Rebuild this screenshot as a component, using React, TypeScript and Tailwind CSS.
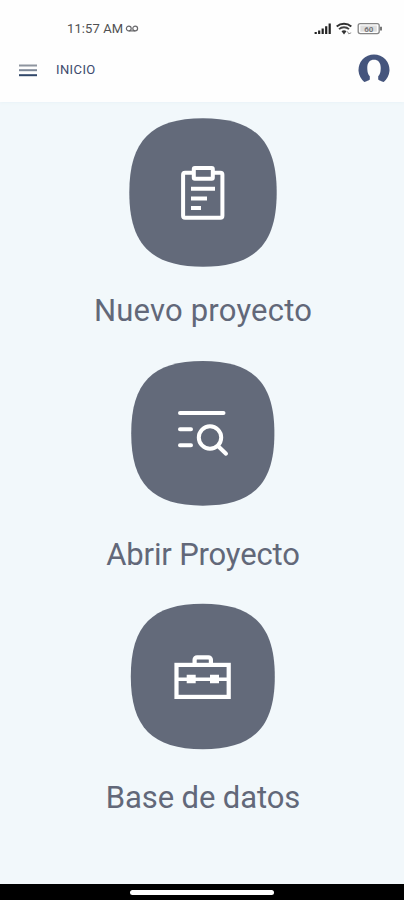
import type { ReactNode } from "react";

function Squircle({ viewBox, box, className, children }: { viewBox: string; box: [number, number, number, number]; className: string; children: ReactNode }) {
  const [x, y, w, h] = box;
  return (
    <svg viewBox={viewBox} className={className} fill="none">
      <path
        transform={`translate(${x} ${y}) scale(${w / 100} ${h / 100})`}
        d="M50 0C85 0 100 15 100 50C100 85 85 100 50 100C15 100 0 85 0 50C0 15 15 0 50 0Z"
        fill="#636a7a"
      />
      {children}
    </svg>
  );
}

function StatusBar() {
  return (
    <div className="flex h-[42px] items-start justify-between pt-[22px] pr-[21px] pl-[67px]">
      <div className="flex items-center">
        <span className="-mt-px w-[58px] text-[13px] leading-[15px] tracking-[0.1px] whitespace-nowrap text-[#505052]">11:57 AM</span>
        <svg viewBox="0 0 14 8" className="-mt-px h-2 w-3.5" fill="none" stroke="#68686b" strokeWidth="1.2">
          <circle cx="3.8" cy="3.5" r="2.4" />
          <circle cx="10.2" cy="3.5" r="2.4" />
          <path d="M3.8 5.9h6.4" />
        </svg>
      </div>
      <svg viewBox="314 21 69 15" className="-mt-px h-[15px] w-[69px]" fill="none">
        <path d="M315.7 34v-2M319.2 34v-3.5M322.7 34v-5.5M326.2 34v-7.7M329.7 34V23.5" stroke="#222" strokeWidth="2.2" />
        <path d="M336.7 26.4c4.2-3.6 10.4-3.6 14.6 0" stroke="#303030" strokeWidth="2" />
        <path d="M339 29.1c2.8-2.5 7.2-2.5 10 0" stroke="#444" strokeWidth="1.8" />
        <path d="M341.5 31.2c1.5-1.2 3.5-1.2 5 0L344 34.5z" fill="#333" />
        <path d="M347.5 31.5l1.2 2.3 2.5-1" stroke="#8b8b8b" />
        <rect x="358.2" y="23.6" width="21" height="10" rx="2" stroke="#858585" strokeWidth="1.3" />
        <rect x="360.3" y="25.5" width="16.5" height="6.2" fill="#dedede" />
        <path d="M381 26.8v3.6" stroke="#777" strokeWidth="2" />
        <text x="368.8" y="31.5" textAnchor="middle" fontSize="8" fontWeight="700" fill="#77777a">60</text>
      </svg>
    </div>
  );
}

function Header() {
  return (
    <header className="h-[102px] bg-[#fefefe] shadow-[0_1px_3px_#e9f3f7]">
      <StatusBar />
      <div className="flex h-14 items-center justify-between pr-[14px] pl-[19px]">
        <div className="flex items-center">
          <svg viewBox="0 0 18 14" className="h-3.5 w-[18px]" strokeWidth="2">
            <path d="M0 2.5h18" stroke="#8e959f" />
            <path d="M0 7.2h18" stroke="#7d8898" />
            <path d="M0 12.2h18" stroke="#304769" />
          </svg>
          <span className="ml-[19px] text-[13px] leading-4 tracking-[0.4px] text-[#3d4a6d]">INICIO</span>
        </div>
        <svg viewBox="358 54 32 32" className="h-8 w-8">
          <path
            d="M364.3 82a15.5 15.5 0 1 1 19.4 0c-2.2-.6-4.7-1.7-5.5-2.5v-3.3c1.6-1.7 2.2-3.6 2.4-6 .8-7.1-2.2-10.4-6.6-10.4s-7.4 3.3-6.6 10.4c.2 2.4.8 4.3 2.4 6v3.3c-.8.8-3.3 1.9-5.5 2.5z"
            fill="#45557d"
          />
        </svg>
      </div>
    </header>
  );
}

export default function App() {
  return (
    <div className="flex h-[900px] w-[404px] flex-col overflow-hidden bg-[#f2f8fb] font-['Roboto',sans-serif]">
      <Header />
      <main className="flex flex-1 flex-col items-center pt-4 text-center text-[31px] leading-[38px] text-[#626879]">
        <button className="flex h-[243px] flex-col items-center pl-[2px]">
          <Squircle viewBox="129 118 148 149" box={[129.3, 118.2, 147.4, 148.5]} className="h-[149px] w-[148px]">
            <g stroke="#fff" strokeWidth="4">
              <path d="M193.7 172.7h-8.6a2 2 0 0 0-2 2v41.1a2 2 0 0 0 2 2h35.3a2 2 0 0 0 2-2v-41.1a2 2 0 0 0-2-2h-7.4" />
              <rect x="193.8" y="168" width="19" height="10.8" rx="1" />
              <path d="M191 188.8h24M191 198.4h16M191 208h10" />
            </g>
          </Squircle>
          <span className="mt-[25px] tracking-[0.2px]">Nuevo proyecto</span>
        </button>
        <button className="flex h-[242px] flex-col items-center pl-[2px]">
          <Squircle viewBox="130 360 146 147" box={[131.2, 361, 143.2, 144.7]} className="-mt-px h-[147px] w-[146px]">
            <g stroke="#fff" strokeWidth="4" strokeLinecap="round">
              <path d="M180 413.1h43.5M180 429.3h11M180 445.3h11M218.5 446.5l7.5 7.2" />
              <circle cx="210" cy="437.5" r="11.2" />
            </g>
          </Squircle>
          <span className="mt-[29px] tracking-[-0.17px]">Abrir Proyecto</span>
        </button>
        <button className="flex flex-col items-center pl-[2px]">
          <Squircle viewBox="130 603 146 147" box={[130.8, 603.8, 144, 145.4]} className="h-[147px] w-[146px]">
            <g stroke="#fff" strokeWidth="4.2">
              <rect x="176.5" y="664.9" width="52.2" height="32" />
              <path d="M194.6 664v-4.2a2.5 2.5 0 0 1 2.5-2.5h11.3a2.5 2.5 0 0 1 2.5 2.5v4.2" />
              <path d="M177 679.2h51.5" strokeWidth="3.6" />
            </g>
            <path d="M186.7 674.8h9v8.5h-9zM210 674.8h9v8.5h-9z" fill="#fff" />
          </Squircle>
          <span className="mt-[29px] tracking-[-0.1px]">Base de datos</span>
        </button>
      </main>
      <footer className="flex h-4 items-start justify-center bg-black pt-[6px]">
        <div className="h-[5px] w-[144px] rounded-full bg-white" />
      </footer>
    </div>
  );
}
